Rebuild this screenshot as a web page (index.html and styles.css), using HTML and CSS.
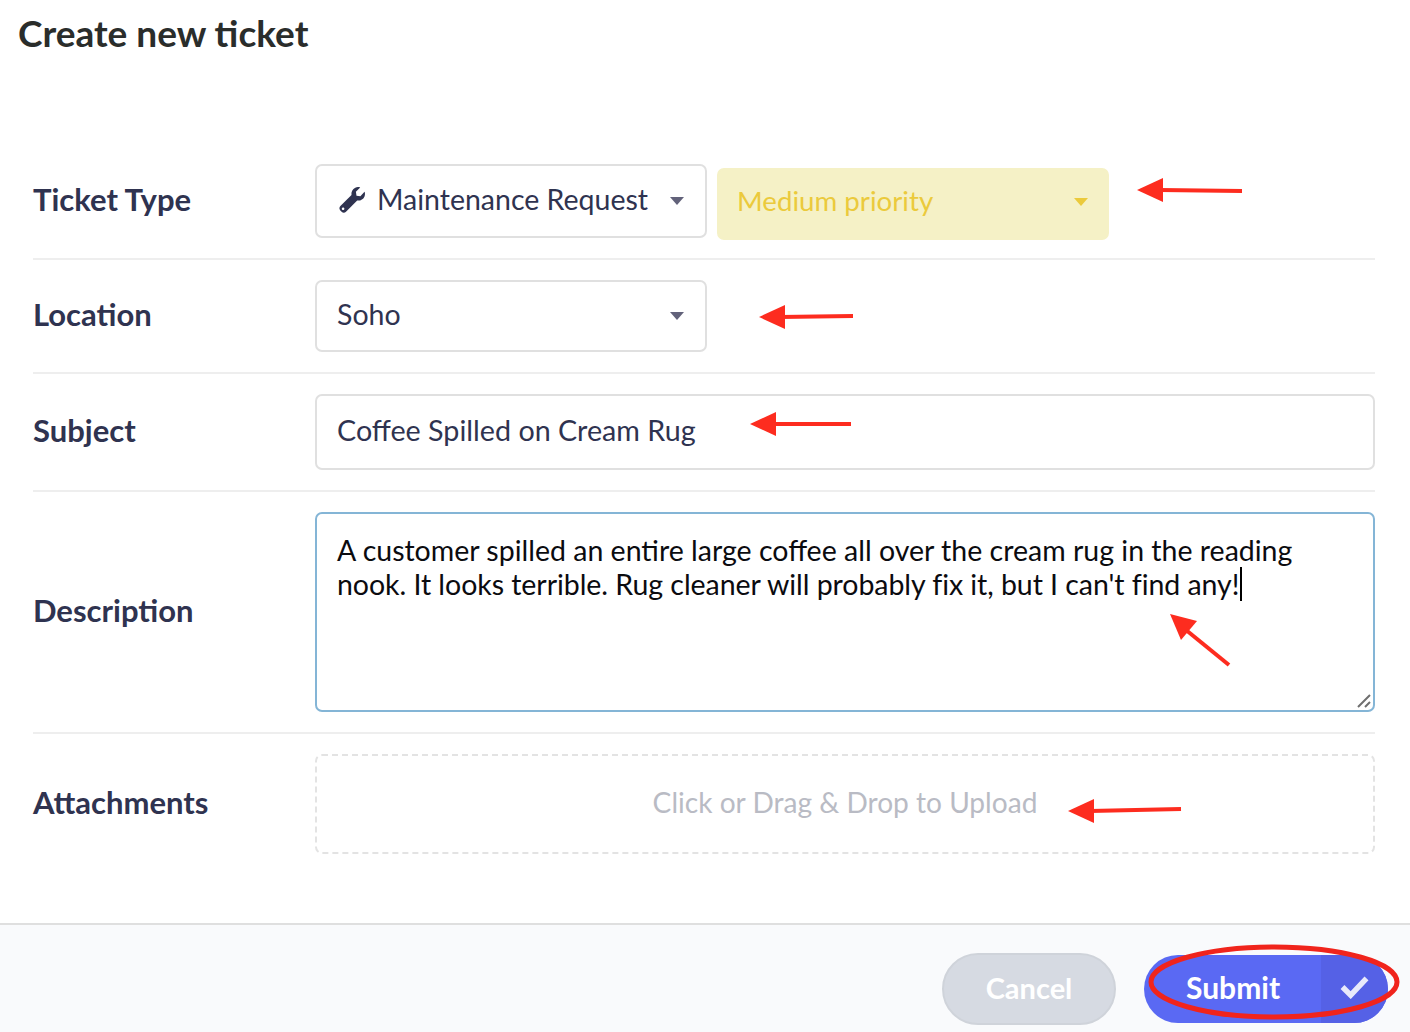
FILE: index.html
```html
<!DOCTYPE html>
<html>
  <head>
    <title>Create new ticket</title>
    <meta charset="utf-8">
    <link rel="stylesheet" href="styles.css">
  </head>
  <body>
    <div class="page">
      <h1 class="title">Create new ticket</h1>

      <form class="ticketform">
        <div class="row row-type">
          <div class="label">Ticket Type</div>
          <div class="controls">
            <div class="select select-type">
              <span class="selectval">
                <svg class="wrench" viewBox="0 0 28 28"><path d="M26.600 5.800c.6 1.600.5 3.400-.2 4.900-1.300 2.800-4.300 4.300-7.200 3.800L8 25.700c-1.200 1.300-3.100 1.300-4.400.1l-1.300-1.300c-1.200-1.300-1.200-3.200.1-4.400L13.500 8.900c-.5-2.900 1-5.900 3.800-7.200 1.500-.7 3.300-.8 4.900-.2l-4.300 4.300.6 3.900 3.900.6 4.100-4.500zM5.100 24.100c.7 0 1.300-.6 1.300-1.300s-.6-1.300-1.300-1.300-1.300.6-1.300 1.300.6 1.300 1.300 1.300z"/></svg>
                Maintenance Request
              </span>
              <span class="caret"></span>
            </div>
            <div class="select select-priority">
              <span class="selectval">Medium priority</span>
              <span class="caret"></span>
            </div>
          </div>
        </div>

        <div class="row row-location">
          <div class="label">Location</div>
          <div class="controls">
            <div class="select select-location">
              <span class="selectval">Soho</span>
              <span class="caret"></span>
            </div>
          </div>
        </div>

        <div class="row row-subject">
          <div class="label">Subject</div>
          <div class="controls">
            <div class="input">Coffee Spilled on Cream Rug</div>
          </div>
        </div>

        <div class="row row-description">
          <div class="label">Description</div>
          <div class="controls">
            <div class="textarea">A customer spilled an entire large coffee all over the cream rug in the reading <span class="tightline">nook. It looks terrible. Rug cleaner will probably fix it, but I can't find any!</span><span class="textcaret"></span>
              <svg class="grip" viewBox="0 0 14 14"><path d="M1 13L13 1M8 13L13 8"/></svg>
            </div>
          </div>
        </div>

        <div class="row row-attach">
          <div class="label">Attachments</div>
          <div class="controls">
            <div class="dropzone">Click or Drag &amp; Drop to Upload</div>
          </div>
        </div>
      </form>

      <div class="footer">
        <button type="button" class="btn btn-cancel">Cancel</button>
        <button type="button" class="btn btn-submit">
          <span class="btntext">Submit</span>
          <span class="btnicon">
            <svg viewBox="0 0 28 22"><path d="M3 11l7.500 7.500L25 3"/></svg>
          </span>
        </button>
      </div>

      <!-- red arrows and circle drawn on top of the screenshot -->
      <svg class="marks" viewBox="0 0 1410 1032">
        <g class="arrowline">
          <path d="M1160 190L1242 191"/>
          <path d="M780 317L853 316"/>
          <path d="M772 424L851 424"/>
          <path d="M1186 630L1229 665"/>
          <path d="M1090 811L1181 809"/>
        </g>
        <g class="arrowhead">
          <path d="M1137 190L1163 178V202z"/>
          <path d="M759 317L785 305V329z"/>
          <path d="M750 424L776 412V436z"/>
          <path d="M1170 614L1197 621L1181 640z"/>
          <path d="M1068 811L1094 799V823z"/>
        </g>
        <ellipse class="ring" cx="1274" cy="982" rx="123" ry="35"/>
      </svg>
    </div>
  </body>
</html>
```

FILE: styles.css
```css
html, body {
  margin: 0;
  padding: 0;
  background-color: white;
}
body {
  font-family: "Lato", "Noto Sans", Arial, sans-serif;
  color: #2f3350;
}
.page {
  position: relative;
  width: 1410px;
  height: 1032px;
  overflow: hidden;
  display: flex;
  flex-direction: column;
}
.title {
  margin: 0;
  padding: 12px 0 0 18px;
  height: 150px;
  box-sizing: border-box;
  font-size: 37px;
  line-height: 42px;
  font-weight: 700;
  color: #2a2d2b;
}
.ticketform {
  flex: 1;
  margin: 0 35px 0 33px;
}
.row {
  display: grid;
  grid-template-columns: 282px 1fr;
  align-items: center;
  padding: 20px 0;
  border-bottom: 2px solid #eeeeee;
}
.row-type {
  padding-top: 14px;
}
.row-attach {
  border-bottom: none;
}
.label {
  padding-bottom: 4px;
  font-size: 31px;
  font-weight: 700;
  color: #2f3350;
}
.controls {
  display: flex;
  align-items: flex-start;
  gap: 10px;
}
.select {
  display: flex;
  align-items: center;
  justify-content: space-between;
  width: 392px;
  box-sizing: border-box;
  padding: 0 21px 0 20px;
  border: 2px solid #e0e0e0;
  border-radius: 7px;
  font-size: 28.5px;
}
.select-type {
  height: 74px;
}
.select-location {
  height: 72px;
}
.select-priority {
  height: 72px;
  margin: 4px 0 -2px;
  border-color: #f5f1c6;
  background-color: #f5f1c6;
  color: #ebca3c;
  font-size: 27.7px;
  padding-left: 18px;
  padding-right: 19px;
}
.select-priority .selectval {
  padding-bottom: 8px;
}
.select-priority .caret {
  margin-bottom: 4px;
  border-top-color: #ebca3c;
}
.selectval {
  display: flex;
  align-items: center;
  gap: 11px;
  padding-bottom: 5px;
}
.wrench {
  width: 28px;
  height: 28px;
  margin: 3px 0 0 1px;
  fill: #2f3350;
}
.caret {
  width: 0;
  height: 0;
  border-left: 7px solid transparent;
  border-right: 7px solid transparent;
  border-top: 8px solid #62627a;
}
.input {
  flex: 1;
  height: 76px;
  box-sizing: border-box;
  padding: 0 20px 5px;
  display: flex;
  align-items: center;
  border: 2px solid #e0e0e0;
  border-radius: 7px;
  font-size: 28.7px;
}
.textarea {
  position: relative;
  flex: 1;
  height: 200px;
  box-sizing: border-box;
  padding: 19px 20px;
  border: 2px solid #84b5d6;
  border-radius: 7px;
  font-size: 28.5px;
  line-height: 34px;
  color: #0b0b0f;
}
.tightline {
  letter-spacing: -0.05px;
}
.textcaret {
  display: inline-block;
  width: 2px;
  height: 34px;
  margin-left: 1px;
  vertical-align: top;
  background-color: black;
}
.grip {
  position: absolute;
  right: 2px;
  bottom: 2px;
  width: 14px;
  height: 14px;
  fill: none;
  stroke: #6f6f6f;
  stroke-width: 2;
}
.dropzone {
  flex: 1;
  height: 100px;
  box-sizing: border-box;
  display: flex;
  align-items: center;
  justify-content: center;
  padding-bottom: 5px;
  border: 2px dashed #e3e3e3;
  border-radius: 7px;
  font-size: 28.1px;
  color: #b9bbc4;
}
.footer {
  height: 109px;
  box-sizing: border-box;
  display: flex;
  align-items: flex-start;
  justify-content: flex-end;
  gap: 28px;
  padding: 28px 22px 0 0;
  border-top: 2px solid #dfdfdf;
  background-color: #f9fafc;
}
.btn {
  font-family: inherit;
  font-weight: 700;
  color: white;
  border-radius: 36px;
  padding: 0;
}
.btn-cancel {
  width: 174px;
  height: 72px;
  padding-bottom: 4px;
  font-size: 29px;
  background-color: #d6dae2;
  border: 2px solid #cfd3da;
}
.btn-submit {
  display: flex;
  width: 244px;
  height: 68px;
  margin-top: 2px;
  overflow: hidden;
  border: none;
  font-size: 30px;
  background-color: #5a69f3;
}
.btntext {
  flex: 1;
  line-height: 64px;
  text-align: left;
  padding-left: 42px;
}
.btnicon {
  width: 67px;
  height: 100%;
  display: flex;
  align-items: center;
  justify-content: center;
  background-color: #5561e6;
}
.btnicon svg {
  width: 31px;
  height: 24px;
  margin-bottom: 4px;
  fill: none;
  stroke: #e8eafb;
  stroke-width: 5;
}
.marks {
  position: absolute;
  left: 0;
  top: 0;
  width: 1410px;
  height: 1032px;
  pointer-events: none;
}
.arrowline path {
  fill: none;
  stroke: #fd2c1f;
  stroke-width: 4;
}
.arrowhead path {
  fill: #fd2c1f;
}
.ring {
  fill: none;
  stroke: #f0241c;
  stroke-width: 5;
}
```
